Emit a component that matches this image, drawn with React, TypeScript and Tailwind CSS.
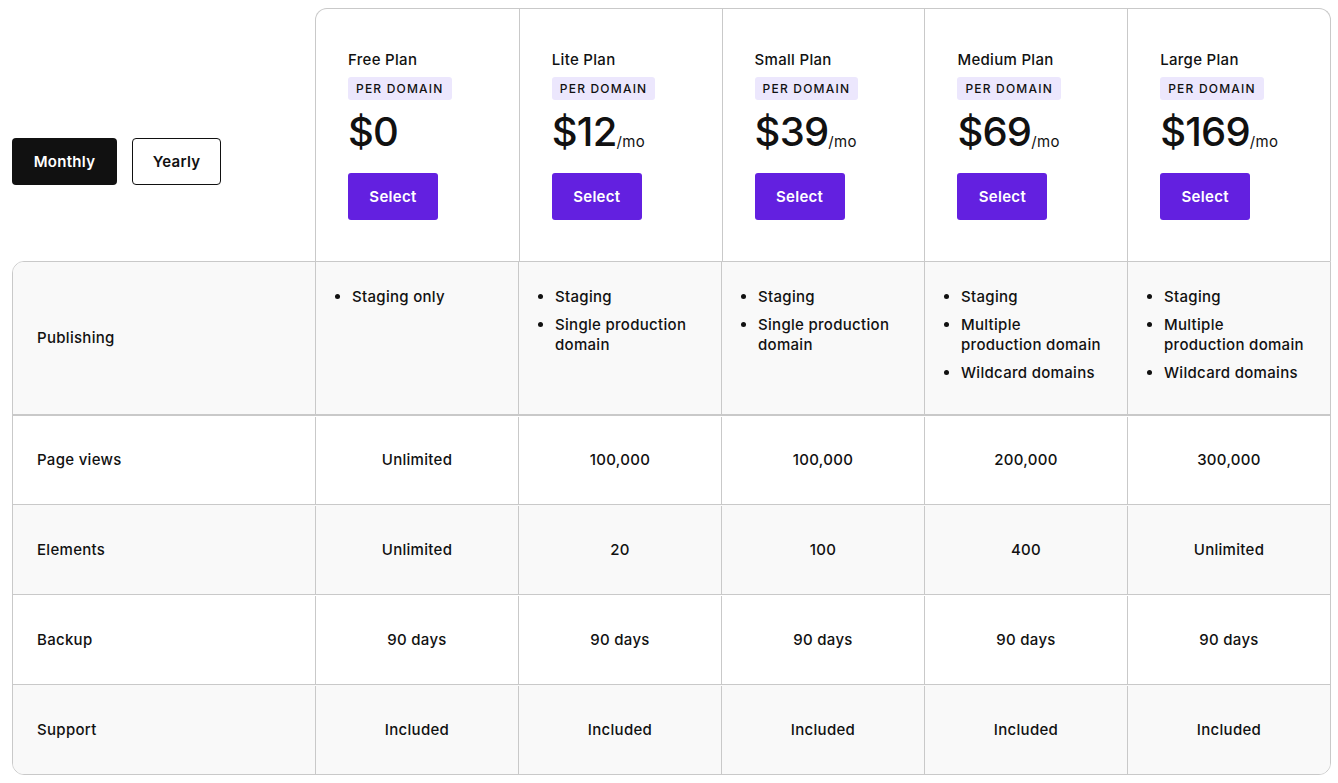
import React from "react";

type Plan = { name: string; price: string; mo: boolean };

const plans: Plan[] = [
  { name: "Free Plan", price: "$0", mo: false },
  { name: "Lite Plan", price: "$12", mo: true },
  { name: "Small Plan", price: "$39", mo: true },
  { name: "Medium Plan", price: "$69", mo: true },
  { name: "Large Plan", price: "$169", mo: true },
];

const publishing: string[][] = [
  ["Staging only"],
  ["Staging", "Single production domain"],
  ["Staging", "Single production domain"],
  ["Staging", "Multiple production\u00a0domain", "Wildcard domains"],
  ["Staging", "Multiple production\u00a0domain", "Wildcard domains"],
];

const rows: { label: string; values: string[]; gray: boolean }[] = [
  { label: "Page views", values: ["Unlimited", "100,000", "100,000", "200,000", "300,000"], gray: false },
  { label: "Elements", values: ["Unlimited", "20", "100", "400", "Unlimited"], gray: true },
  { label: "Backup", values: ["90 days", "90 days", "90 days", "90 days", "90 days"], gray: false },
  { label: "Support", values: ["Included", "Included", "Included", "Included", "Included"], gray: true },
];

const App: React.FC = () => (
  <div className="min-h-screen bg-white font-['Inter',sans-serif] text-[15px] tracking-[0.02em] text-[#111111] antialiased">
    <div className="ml-[12px] pt-[8px] w-[1319px]">
      {/* header */}
      <div className="flex">
        <div className="w-[303px] pt-[130px] flex gap-[15px]">
          <button type="button" className="w-[105px] h-[47px] pt-px rounded-[4px] bg-[#111111] text-white font-semibold">
            Monthly
          </button>
          <button type="button" className="w-[89px] h-[47px] pt-px rounded-[4px] border border-[#111111] bg-white font-semibold">
            Yearly
          </button>
        </div>
        <div className="flex-1 grid grid-cols-5 border border-b-0 border-[#c9c9c9] rounded-t-[12px]">
          {plans.map((p, i) => (
            <div key={p.name} className={`pl-[32px] pt-[41px] pb-[41px] ${i > 0 ? "border-l border-[#c9c9c9]" : ""}`}>
              <p className="leading-5 font-medium">{p.name}</p>
              <span className="mt-[7px] inline-block rounded-[3px] bg-[#ece7fd] px-2 py-1 text-[12px] leading-[15px] font-medium tracking-[0.1em]">
                PER DOMAIN
              </span>
              <div className="mt-[8px] flex items-end h-[48px]">
                <span className="text-[40px] leading-[48px] font-medium tracking-[-0.02em]">{p.price}</span>
                {p.mo && <span className="text-[15px] leading-[28px]">/mo</span>}
              </div>
              <button type="button" className="mt-[17px] w-[90px] h-[47px] pt-px rounded-[3px] bg-[#6320e0] text-white font-semibold">
                Select
              </button>
            </div>
          ))}
        </div>
      </div>

      {/* table */}
      <div className="border border-[#c9c9c9] rounded-b-[12px] rounded-tl-[12px] overflow-hidden">
        <div className="grid grid-cols-[302px_repeat(5,1fr)] bg-[#f9f9f9] h-[152px]">
          <div className="flex items-center pl-6 font-medium">Publishing</div>
          {publishing.map((items, i) => (
            <div key={i} className="border-l border-[#c9c9c9] pt-[25px] pl-[36px] pr-[18px]">
              <ul className="list-disc space-y-2 leading-5 font-medium">
                {items.map((it) => (
                  <li key={it}>{it}</li>
                ))}
              </ul>
            </div>
          ))}
        </div>
        {rows.map((r, idx) => (
          <div
            key={r.label}
            className={`grid grid-cols-[302px_repeat(5,1fr)] h-[90px] pt-px border-t border-[#c9c9c9] ${idx === 0 ? "border-t-2" : ""} ${r.gray ? "bg-[#f9f9f9]" : "bg-white"}`}
          >
            <div className="flex items-center pl-6 font-medium">{r.label}</div>
            {r.values.map((v, i) => (
              <div key={i} className="flex items-center justify-center border-l border-[#c9c9c9] font-medium">
                {v}
              </div>
            ))}
          </div>
        ))}
      </div>
    </div>
  </div>
);

export default App;
